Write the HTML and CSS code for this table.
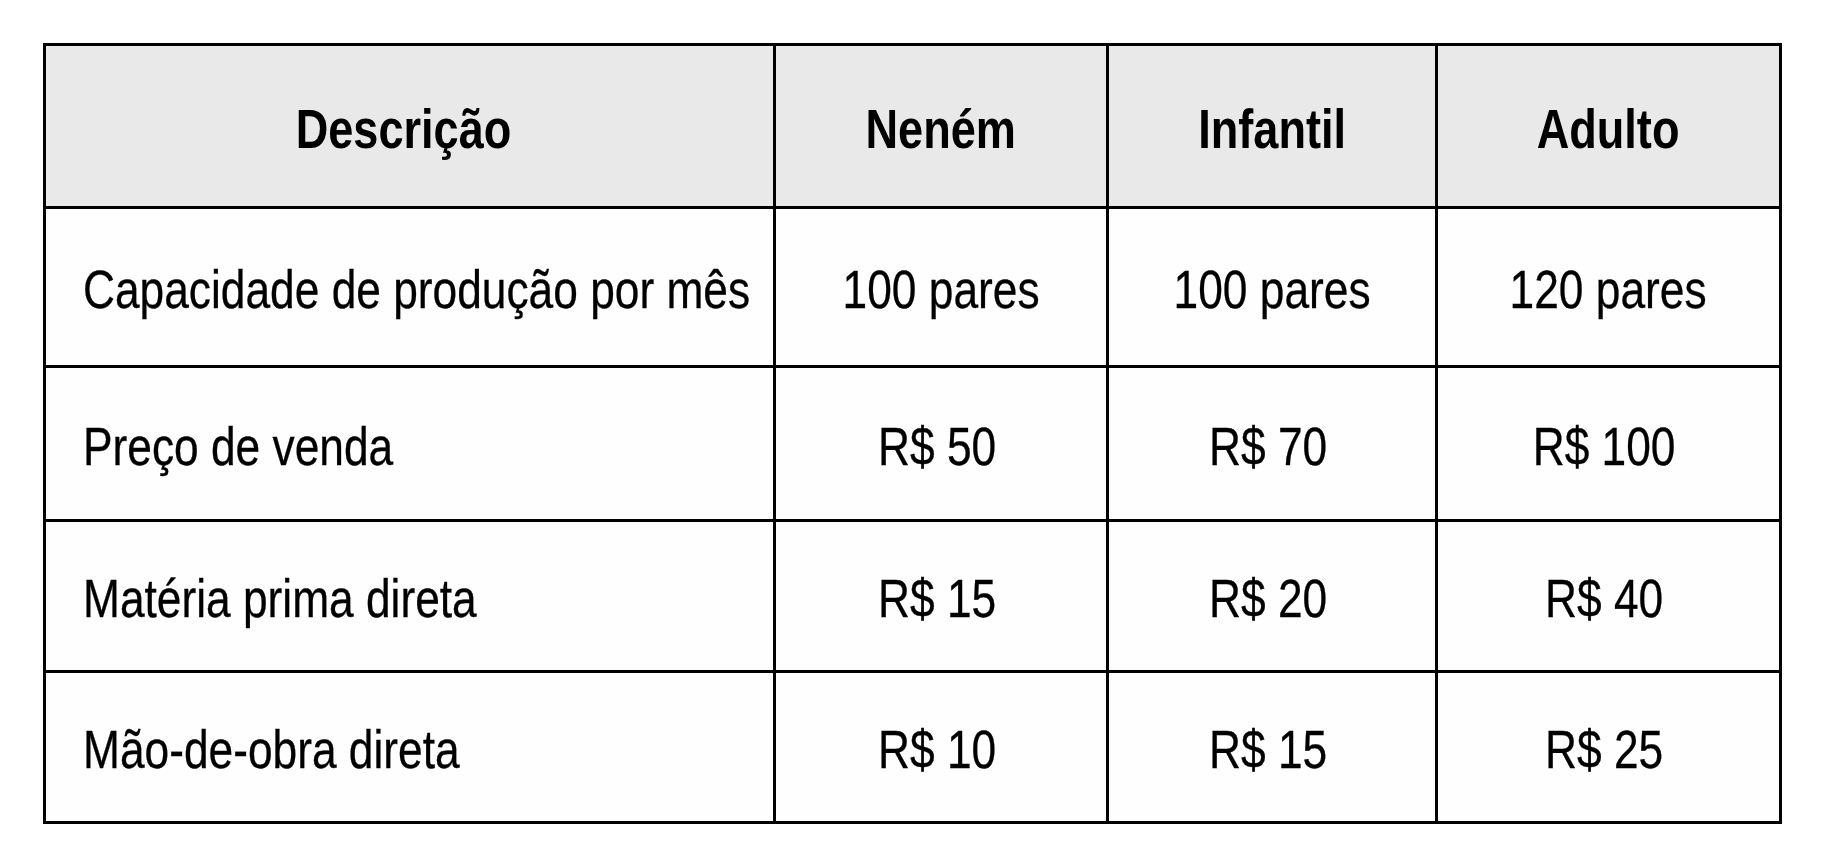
FILE: index.html
```html
<!DOCTYPE html>
<html lang="pt">
<head>
<meta charset="utf-8">
<title>Tabela de produção</title>
<link rel="stylesheet" href="styles.css">
</head>
<body>
<div class="table" role="table">
  <div class="cell head first" role="columnheader"><span class="txt">Descrição</span></div>
  <div class="cell head" role="columnheader"><span class="txt">Neném</span></div>
  <div class="cell head" role="columnheader"><span class="txt">Infantil</span></div>
  <div class="cell head" role="columnheader"><span class="txt">Adulto</span></div>

  <div class="cell label" role="cell"><span class="txt">Capacidade de produção por mês</span></div>
  <div class="cell" role="cell"><span class="txt">100 pares</span></div>
  <div class="cell" role="cell"><span class="txt">100 pares</span></div>
  <div class="cell" role="cell"><span class="txt">120 pares</span></div>

  <div class="cell label" role="cell"><span class="txt">Preço de venda</span></div>
  <div class="cell money" role="cell"><span class="txt">R$ 50</span></div>
  <div class="cell money" role="cell"><span class="txt">R$ 70</span></div>
  <div class="cell money" role="cell"><span class="txt">R$ 100</span></div>

  <div class="cell label" role="cell"><span class="txt">Matéria prima direta</span></div>
  <div class="cell money" role="cell"><span class="txt">R$ 15</span></div>
  <div class="cell money" role="cell"><span class="txt">R$ 20</span></div>
  <div class="cell money" role="cell"><span class="txt">R$ 40</span></div>

  <div class="cell label" role="cell"><span class="txt">Mão-de-obra direta</span></div>
  <div class="cell money" role="cell"><span class="txt">R$ 10</span></div>
  <div class="cell money" role="cell"><span class="txt">R$ 15</span></div>
  <div class="cell money" role="cell"><span class="txt">R$ 25</span></div>
</div>
</body>
</html>
```

FILE: styles.css
```css
html, body {
  margin: 0;
  padding: 0;
  background: #ffffff;
}

body {
  font-family: "Liberation Sans", Arial, sans-serif;
  color: #000;
}

.table {
  display: grid;
  grid-template-columns: 727px 330px 326px 341px;
  grid-template-rows: 160px 156px 151px 148px 148px;
  gap: 3px;
  width: max-content;
  margin: 43px 0 0 43px;
  border: 3px solid #000;
  background: #000;
}

.cell {
  display: flex;
  align-items: center;
  justify-content: center;
  background: #fefefe;
  font-size: 54px;
  overflow: hidden;
}

.head {
  background: #e9e9e9;
  font-weight: bold;
  font-size: 55px;
}

.head.first {
  padding-right: 12px;
}

.label {
  justify-content: flex-start;
  padding-left: 37px;
}

.money {
  padding-right: 8px;
}

.txt {
  display: inline-block;
  white-space: nowrap;
  transform: scaleX(0.82);
  transform-origin: center center;
  margin-top: 4px;
  -webkit-text-stroke: 0.3px #000;
}

.label .txt {
  transform-origin: left center;
}

.head .txt {
  margin-top: 6px;
  -webkit-text-stroke: 0;
}
```
